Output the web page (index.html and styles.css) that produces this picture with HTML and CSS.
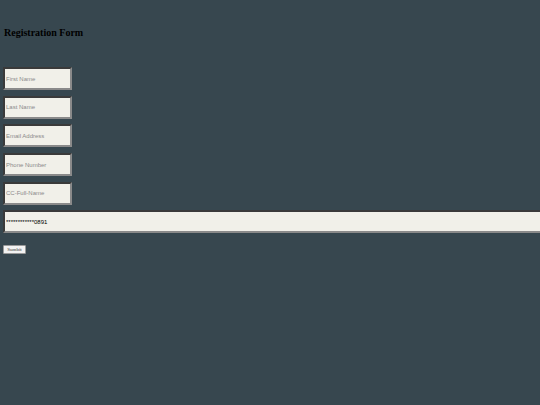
FILE: index.html
```html
<!DOCTYPE html>
<html>
<head>
<meta charset="utf-8">
<link rel="stylesheet" href="styles.css">
</head>
<body>
<h1 class="title">Registration Form</h1>
<form class="form">
  <input class="field" type="text" placeholder="First Name">
  <input class="field" type="text" placeholder="Last Name">
  <input class="field" type="text" placeholder="Email Address">
  <input class="field" type="text" placeholder="Phone Number">
  <input class="field" type="text" placeholder="CC-Full-Name">
  <input class="field field-wide" type="text" value="************0891">
  <button class="submit" type="button">Sumbit</button>
</form>
</body>
</html>
```
FILE: styles.css
```css
html, body {
  margin: 0;
  padding: 0;
  background: #37474f;
  overflow: hidden;
  height: 100%;
}
body {
  padding: 0 0 0 3px;
  font-family: "Liberation Serif", serif;
}
.title {
  margin: 0;
  padding-top: 27px;
  font-size: 10px;
  line-height: 12px;
  font-weight: bold;
  color: #000;
  padding-left: 1px;
}
.form {
  display: flex;
  flex-direction: column;
  align-items: flex-start;
  gap: 5.7px;
  margin-top: 28px;
}
.field {
  box-sizing: border-box;
  width: 69px;
  height: 23px;
  margin: 0;
  padding: 0 0 0 1px;
  background: #f1f0e9;
  border: 2px solid;
  border-color: #3a3a3a #8a8a8a #8a8a8a #3a3a3a;
  font-family: "Liberation Sans", Arial, sans-serif;
  font-size: 6px;
  color: #000;
  outline: none;
}
.field::placeholder {
  color: #8a8a8a;
}
.field-wide {
  width: 560px;
}
.submit {
  box-sizing: border-box;
  margin: 6px 0 0 0;
  width: 23px;
  height: 9px;
  padding: 0;
  font-family: "Liberation Serif", serif;
  font-size: 5px;
  line-height: 5px;
  color: #333;
  background: #f2f2f2;
  border: 1px solid #9a9a9a;
  border-radius: 1px;
}
```
